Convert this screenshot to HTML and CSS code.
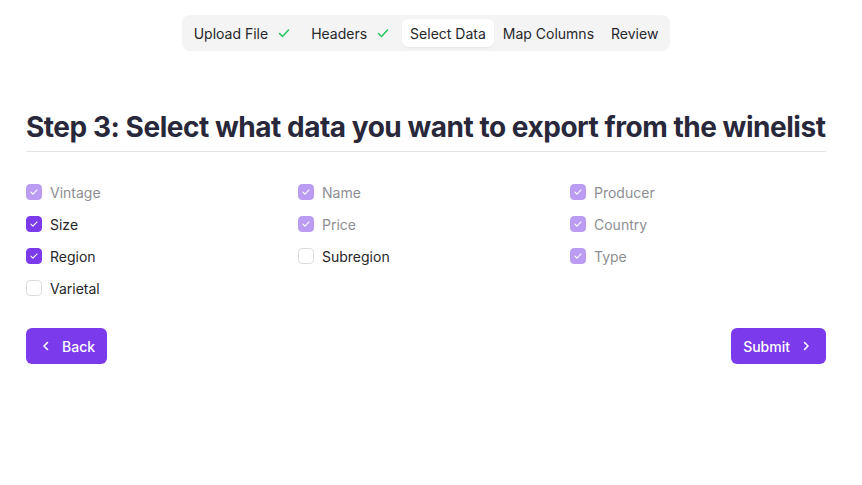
FILE: index.html
```html
<!DOCTYPE html>
<html>
<head>
<meta charset="utf-8">
<link rel="stylesheet" href="styles.css">
</head>
<body>
<div class="page">
  <nav class="tabs-wrap">
    <div class="tabs">
      <div class="tab">Upload File <svg class="ok" viewBox="0 0 16 16"><path d="M3.5 8.5l3 3 6-6.5"/></svg></div>
      <div class="tab">Headers <svg class="ok" viewBox="0 0 16 16"><path d="M3.5 8.5l3 3 6-6.5"/></svg></div>
      <div class="tab active">Select Data</div>
      <div class="tab">Map Columns</div>
      <div class="tab">Review</div>
    </div>
  </nav>

  <h1 class="title">Step 3: Select what data you want to export from the winelist</h1>

  <div class="grid">
    <label class="item disabled"><span class="box checked"><svg viewBox="0 0 16 16"><path d="M4.5 8.2l2.3 2.3 4.7-4.8"/></svg></span>Vintage</label>
    <label class="item disabled"><span class="box checked"><svg viewBox="0 0 16 16"><path d="M4.5 8.2l2.3 2.3 4.7-4.8"/></svg></span>Name</label>
    <label class="item disabled"><span class="box checked"><svg viewBox="0 0 16 16"><path d="M4.5 8.2l2.3 2.3 4.7-4.8"/></svg></span>Producer</label>

    <label class="item"><span class="box checked"><svg viewBox="0 0 16 16"><path d="M4.5 8.2l2.3 2.3 4.7-4.8"/></svg></span>Size</label>
    <label class="item disabled"><span class="box checked"><svg viewBox="0 0 16 16"><path d="M4.5 8.2l2.3 2.3 4.7-4.8"/></svg></span>Price</label>
    <label class="item disabled"><span class="box checked"><svg viewBox="0 0 16 16"><path d="M4.5 8.2l2.3 2.3 4.7-4.8"/></svg></span>Country</label>

    <label class="item"><span class="box checked"><svg viewBox="0 0 16 16"><path d="M4.5 8.2l2.3 2.3 4.7-4.8"/></svg></span>Region</label>
    <label class="item"><span class="box"></span>Subregion</label>
    <label class="item disabled"><span class="box checked"><svg viewBox="0 0 16 16"><path d="M4.5 8.2l2.3 2.3 4.7-4.8"/></svg></span>Type</label>

    <label class="item"><span class="box"></span>Varietal</label>
  </div>

  <div class="actions">
    <button class="btn back"><svg viewBox="0 0 16 16"><path d="M9.5 4.5L6 8l3.5 3.5"/></svg>Back</button>
    <button class="btn submit">Submit<svg viewBox="0 0 16 16"><path d="M6.5 4.5L10 8l-3.5 3.5"/></svg></button>
  </div>
</div>
</body>
</html>
```

FILE: styles.css
```css
* { box-sizing: border-box; }
html, body { margin: 0; padding: 0; background: #fff; }
body {
  font-family: Inter, "Liberation Sans", sans-serif;
  color: #27272a;
}
.page {
  width: 800px;
  margin-left: 26px;
  padding-top: 15px;
}
.tabs-wrap { display: flex; justify-content: center; }
.tabs {
  display: flex;
  background: #f4f4f5;
  border-radius: 8px;
  padding: 4px;
}
.tab {
  display: flex;
  align-items: center;
  gap: 8px;
  height: 28px;
  padding: 0 8px;
  font-size: 14px;
  font-weight: 400;
  color: #27272a;
  border-radius: 6px;
  white-space: nowrap;
}
.tab + .tab { margin-left: 1px; }
.tab .ok { width: 16px; height: 16px; fill: none; stroke: #22c55e; stroke-width: 1.5; stroke-linecap: round; stroke-linejoin: round; margin-right: 2px; }
.tab.active { background: #fff; box-shadow: 0 1px 2px rgba(0,0,0,0.06); }

.title {
  margin: 58px 0 0;
  font-size: 28px;
  font-weight: 700;
  letter-spacing: -0.47px;
  line-height: 36px;
  color: #28283a;
  padding-bottom: 6px;
  border-bottom: 1px solid #e4e4e7;
  white-space: nowrap;
}

.grid {
  display: grid;
  grid-template-columns: repeat(3, 1fr);
  column-gap: 16px;
  row-gap: 12px;
  margin-top: 30px;
}
.item {
  display: flex;
  align-items: center;
  gap: 8px;
  height: 20px;
  font-size: 14px;
  font-weight: 400;
  color: #27272a;
}
.item.disabled { color: #8e8e94; }
.box {
  width: 16px;
  height: 16px;
  border-radius: 4px;
  border: 1px solid #dcdce0;
  background: #fff;
  display: flex;
  align-items: center;
  justify-content: center;
  flex: none;
}
.box.checked { background: #7c3aed; border-color: #7c3aed; }
.item.disabled .box.checked { background: #bc9cf2; border-color: #bc9cf2; }
.box svg { width: 16px; height: 16px; fill: none; stroke: #fff; stroke-width: 1.2; stroke-linecap: round; stroke-linejoin: round; }

.actions {
  display: flex;
  justify-content: space-between;
  margin-top: 30px;
}
.btn {
  display: flex;
  align-items: center;
  gap: 8px;
  height: 36px;
  border: none;
  border-radius: 6px;
  background: #7c3aed;
  color: #fff;
  font-family: Inter, "Liberation Sans", sans-serif;
  font-size: 14px;
  font-weight: 500;
}
.btn.back { padding: 0 12px 0 12px; }
.btn.submit { padding: 0 12px 0 12px; }
.btn svg { width: 16px; height: 16px; fill: none; stroke: #fff; stroke-width: 1.6; stroke-linecap: round; stroke-linejoin: round; }
```
